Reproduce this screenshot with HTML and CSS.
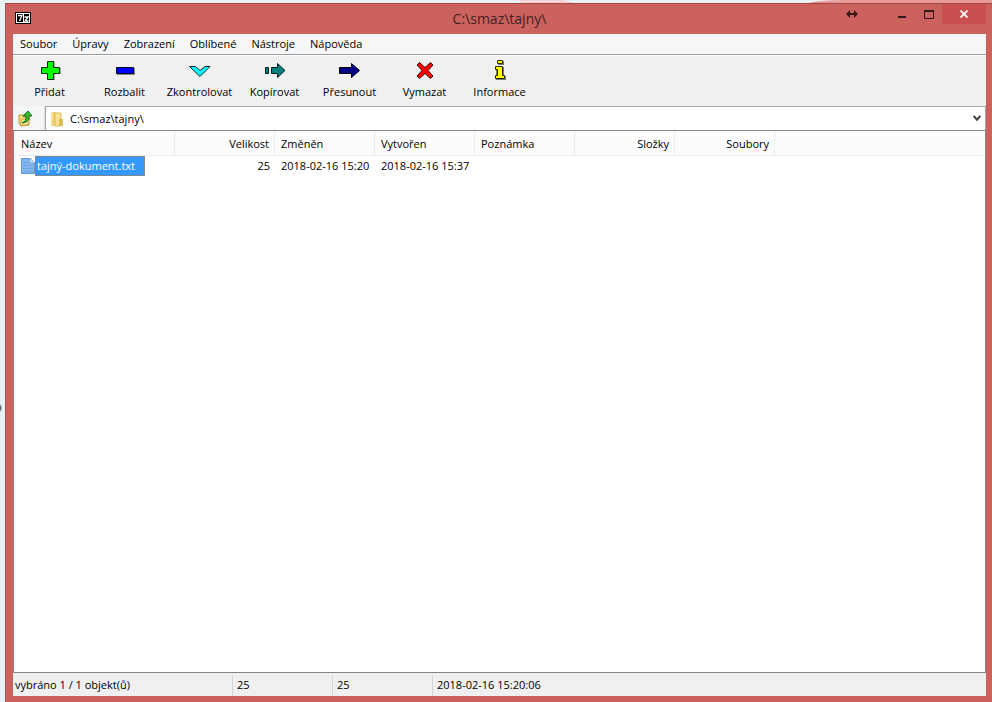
FILE: index.html
```html
<!DOCTYPE html>
<html lang="cs">
<head>
<meta charset="utf-8">
<title>C:\smaz\tajny\</title>
<link rel="stylesheet" href="styles.css">
</head>
<body>
<svg class="backdrop" width="992" height="412" viewBox="0 0 992 412" aria-hidden="true">
  <path d="M518 0h45l12 3h-53z" fill="#f6d3d6"/><path d="M808 3q12-3 40-3h144v3z" fill="#e99a98"/><path d="M0 404q3 4 0 8z" fill="#606970"/>
</svg>
<main class="window">
  <header class="titlebar">
    <svg class="app-icon" width="16" height="12" viewBox="0 0 16 12" aria-hidden="true"><path d="M0 0h16v12H0z"/><path d="M1 1h14v10H1z" fill="#fff"/><path d="M2 2h6v8H2zM9 2h5v8H9z"/><path d="M3 3.5h4L4.500 9M9.500 5h3.500L10 9h3.500" fill="none" stroke="#fff" stroke-width="1.3"/></svg>
    <h1>C:\smaz\tajny\</h1>
    <div class="controls">
      <button class="resize" aria-label="Změnit velikost"><svg width="12" height="8" viewBox="0 0 12 8"><path d="M0 4 4 0v3h4V0l4 4-4 4V5H4v3z" fill="#35191a"/></svg></button>
      <button class="minimize" aria-label="Minimalizovat"><svg width="10" height="10" viewBox="0 0 10 10"><path d="M1 7h8v2H1z" fill="#35191a"/></svg></button>
      <button class="maximize" aria-label="Maximalizovat"><svg width="10" height="9" viewBox="0 0 10 9"><path d="M.5 1h9v7.500h-9z" fill="none" stroke="#35191a"/><path d="M0 0h10v2H0z" fill="#35191a"/></svg></button>
      <button class="close" aria-label="Zavřít"><svg width="8" height="8" viewBox="0 0 8 8"><path d="m.5.5 7 7m0-7-7 7" fill="none" stroke="#fff" stroke-width="1.8"/></svg></button>
    </div>
  </header>
  <nav class="menu" aria-label="Nabídka">
    <button>Soubor</button><button>Úpravy</button><button>Zobrazení</button><button>Oblíbené</button><button>Nástroje</button><button>Nápověda</button>
  </nav>
  <div class="toolbar">
    <button><svg viewBox="0 0 24 22"><path d="M10 3h7v6h6v6h-6v6h-7v-6H4V9h6z" fill="#555" opacity=".5"/><path d="M9.500 2.500h6v6h6v6h-6v6h-6v-6h-6v-6h6z" fill="#0f0" stroke="#052905"/></svg>Přidat</button>
    <button><svg viewBox="0 0 24 22"><path d="M4 9h18v7H4z" fill="#888"/><path d="M3.500 8.500h17v6h-17z" fill="#00f" stroke="#000022"/></svg>Rozbalit</button>
    <button><svg viewBox="0 0 24 22"><path d="M1.500 7.500h6l4.500 4 5-4h5L12 17.500z" fill="#0ff" stroke="#123"/></svg>Zkontrolovat</button>
    <button><svg viewBox="0 0 24 22"><path d="M2.500 8.500h3v6h-3zM8.500 8.500h6V4.500l7.500 7-7.500 7v-4h-6z" fill="#008080" stroke="#002020"/></svg>Kopírovat</button>
    <button><svg viewBox="0 0 24 22"><path d="M1.500 8.500h12V4.500l8 7-8 7v-4h-12z" fill="#000080" stroke="#00000c"/></svg>Přesunout</button>
    <button><svg viewBox="0 0 24 22"><path d="m6.500 3.500 5.500 5 5.500-5L20 6l-5 5.500 5 5.500-2.500 2.500-5.500-5-5.500 5L4 17l5-5.500L4 6z" fill="#f00" stroke="#430505"/></svg>Vymazat</button>
    <button><svg viewBox="0 0 24 22"><path d="M10 2h6v4h-6zM8 8h8v9h2v4H8z" fill="#777"/><path d="M9.500 1.500h5v3h-5zM7.500 7.500h7v9h2v3h-9v-3h2v-6h-2z" fill="#ff0" stroke="#292900"/></svg>Informace</button>
  </div>
  <div class="address">
    <button class="up" aria-label="O úroveň výš"><svg width="16" height="18" viewBox="0 0 16 18"><path d="M2 6h4l1 2h5v8l-8 1-2-3z" fill="#f5dc70" stroke="#b89a3a"/><path d="m3 16 2-6h8l-3 6z" fill="#ffed9c" stroke="#c7aa48"/><path d="M5 14q5-2 4-7H6l5-5 4 5h-3q1 6-7 7z" fill="#36b928" stroke="#167116"/></svg></button>
    <label class="path">
      <svg width="14" height="16" viewBox="0 0 14 16" aria-hidden="true"><path d="M1 1h5v14H1z" fill="#ecd070"/><path d="M5 2h6v13H5z" fill="#f7e292" stroke="#dcbd5c"/><path d="M9 8h4v7H9z" fill="#deba52"/><path d="M2 1v13" stroke="#fff1b8"/></svg>
      <select aria-label="Cesta"><option>C:\smaz\tajny\</option></select>
      <svg width="8" height="7" viewBox="0 0 8 7" aria-hidden="true"><path d="m.7 1 3.300 3.700L7.300 1" fill="none" stroke="#444" stroke-width="2"/></svg>
    </label>
  </div>
  <section class="files">
    <table>
      <colgroup><col class="name"><col><col><col><col><col><col><col class="rest"></colgroup>
      <thead><tr><th>Název</th><th class="num">Velikost</th><th>Změněn</th><th>Vytvořen</th><th>Poznámka</th><th class="num">Složky</th><th class="num">Soubory</th><td></td></tr></thead>
      <tbody><tr><td><div class="file"><svg width="14" height="16" viewBox="0 0 14 16" aria-hidden="true"><path d="M.5.5h9l4 4v11H.5z" fill="#83b6ec" stroke="#5c98da"/><path d="M9.500.5v4h4z" fill="#c5e0fa"/><path d="M2 4.500h6m-6 3h10m-10 3h10m-10 3h10" stroke="#72a9e4"/></svg><span>tajný-dokument.txt</span></div></td><td class="num">25</td><td>2018-02-16 15:20</td><td>2018-02-16 15:37</td><td></td><td></td><td></td><td></td></tr></tbody>
    </table>
  </section>
  <footer class="status"><span class="selected">vybráno 1 / 1 objekt(ů)</span><span>25</span><span>25</span><span class="date">2018-02-16 15:20:06</span></footer>
</main>
</body>
</html>
```
FILE: styles.css
```css
* { box-sizing: border-box; }
body {
  margin: 0;
  padding: 3px 0 0 5px;
  background: #e8f1f4;
  color: #000;
  font: 11px/16px "Open Sans", "Noto Sans", sans-serif;
}
button, select { font: inherit; color: inherit; border: 0; padding: 0; background: none; }
svg { display: block; flex: none; }
.backdrop { position: absolute; left: 0; top: 0; z-index: -1; max-width: 100%; }
.window {
  display: flex;
  flex-direction: column;
  min-height: calc(100vh - 3px);
  padding: 0 6px 6px 7px;
  background: #cc625e;
  border-left: 1px solid #a45352;
  border-top: 1px solid #a34746;
}
.titlebar { display: flex; height: 30px; align-items: flex-start; }
.app-icon { margin: 8px 0 0 2px; }
h1 {
  flex: 1;
  margin: 0;
  padding: 4px 0 0 130px;
  text-align: center;
  color: #441f1f;
  font-size: 14px;
  line-height: 22px;
  font-weight: 400;
}
.controls { display: flex; height: 20px; }
.controls button { display: flex; align-items: center; justify-content: center; width: 27px; }
.controls .resize { width: 28px; margin-right: 22px; }
.controls .close { width: 44px; background: #c94f50; }
.menu { display: flex; gap: 15px; height: 21px; padding: 0 7px; background: #f5f6f7; border-bottom: 1px solid #999; }
.toolbar { display: flex; height: 51px; background: #f0f0f0; border-top: 1px solid #fff; }
.toolbar button { width: 75px; display: flex; flex-direction: column; align-items: center; padding: 3px 2px 0 0; }
.toolbar svg { width: 24px; height: 22px; margin-bottom: 3px; }
.address { display: flex; height: 24px; background: #f0f0f0; }
.up { width: 32px; padding-left: 4px; background: #f5f6f7; border-right: 1px solid #ddd; }
.path { flex: 1; display: flex; align-items: center; gap: 6px; padding: 0 4px; background: #fff; border: 1px solid #a5a5a5; border-bottom: 0; }
.path select { flex: 1; appearance: none; outline: 0; }
.files { flex: 1; background: #fff; border: 1px solid #858585; }
table { width: 100%; table-layout: fixed; border-collapse: separate; border-spacing: 0; }
col { width: 100px; }
.name { width: 161px; }
.rest { width: auto; }
th, td { padding: 0 6px; text-align: left; font-weight: 400; white-space: nowrap; }
thead { background: #fcfcfd; }
thead th, thead td { height: 25px; padding-top: 2px; border-bottom: 1px solid #e9ecef; }
th { border-right: 1px solid #e9ecef; }
th:first-child, td:first-child { padding-left: 7px; }
th.num, td.num { text-align: right; padding-right: 5px; }
tbody tr { height: 20px; }
.file { display: flex; align-items: center; }
.file span { padding: 1px 9px 1px 1px; background: #3399ff; color: #fff; border: 1px solid #7c8794; }
.status { display: flex; height: 23px; padding-top: 2px; background: #f0f0f0; }
.status span { width: 100px; padding: 2px 4px; border-left: 1px solid #d4d4d4; }
.status .selected { width: 219px; padding-left: 2px; border: 0; }
.status .date { flex: 1; }
```
